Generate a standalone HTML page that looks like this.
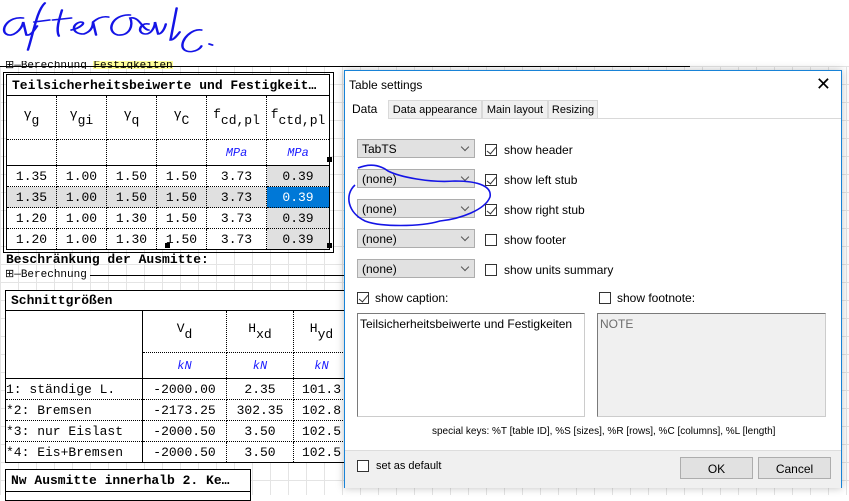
<!DOCTYPE html><html><head><style>
body{margin:0;width:849px;height:495px;overflow:hidden;position:relative;background:#fff;font-family:"Liberation Mono",monospace}
.grid{position:absolute;left:0;top:66px;width:849px;height:429px;background-image:linear-gradient(#e4e4e4 1px,transparent 1px),linear-gradient(90deg,#e4e4e4 1px,transparent 1px);background-size:18px 18px}
.abs{position:absolute}
table{border-collapse:collapse;background:#fff;font-family:"Liberation Mono",monospace;font-size:13px;position:absolute}
td{border:1px dotted #000;text-align:center;padding:0;white-space:nowrap}
sub{font-size:13px;vertical-align:-6px}
.u{color:#1a1aff;font-style:italic;font-size:12px}
.g{background:#e0e0e0}
.ui{font-family:"Liberation Sans",sans-serif;font-size:12px;color:#000;white-space:nowrap}
.dd{position:absolute;left:357px;width:118px;height:19px;background:#e1e1e1;border:1px solid #adadad;box-sizing:border-box;font:12px "Liberation Sans",sans-serif;padding:2px 0 0 4px}
.dd:after{content:"";position:absolute;right:6px;top:4px;width:5px;height:5px;border-right:1px solid #555;border-bottom:1px solid #555;transform:rotate(45deg)}
.cb{position:absolute;width:12px;height:12px;border:1px solid #333;background:#fff;box-sizing:border-box}
.cb.c:after{content:"";position:absolute;left:3px;top:0px;width:4px;height:8px;border-right:1px solid #333;border-bottom:1px solid #333;transform:rotate(40deg)}
.lbl{position:absolute;font:12px "Liberation Sans",sans-serif;white-space:nowrap}
.tab{position:absolute;top:29px;height:18px;border:1px solid #d9d9d9;border-bottom:0;padding:3px 0 0;text-align:center;font-size:11px;box-sizing:border-box;background:#f0f0f0;overflow:hidden}
</style></head><body>
<div class="grid"></div>
<svg class="abs" style="left:0;top:0" width="240" height="60"><g fill="none" stroke="#1414e6" stroke-width="1.6" stroke-linecap="round" transform="scale(1.55,1)">
<path d="M15 18 C5 16 0 30 4 34 C8 38 14 30 15 22 L17 35 C20 36 22 30 24 26"/>
<path d="M29 3 C24 10 22 30 18 50 M22 22 L32 20"/>
<path d="M40 10 C38 20 36 30 38 36 M34 20 L46 18"/>
<path d="M46 30 C52 28 56 22 52 22 C46 24 46 34 54 34 C58 32 60 28 60 22 L62 35 M60 22 C63 18 66 16 70 17"/>
<path d="M84 15 C72 14 68 32 76 35 C84 36 86 25 84 18 C90 16 92 30 96 30"/>
<path d="M96 24 C90 22 88 34 94 34 C98 34 100 26 100 22 L102 34 C104 34 106 30 107 24"/>
<path d="M114 8 L110 40 C112 40 114 36 116 32"/>
<path d="M130 30 C124 28 116 40 118 48 C120 54 128 52 130 46"/>
<path d="M135 44 L137 45"/></g></svg>
<div class="abs ui" style="left:5px;top:61px;font-family:'Liberation Mono';font-size:11px;line-height:10px;height:8px;overflow:hidden">⊞—Berechnung <span style="background:#ffff99">Festigkeiten</span></div>
<div class="abs" style="left:0;top:66px;width:690px;border-top:1px solid #000"></div>
<div class="abs" style="left:3px;top:72px;width:329px;height:179px;border:1px solid #000"></div>
<table style="left:6px;top:74px;width:324px;border:1px solid #000">
<tr style="height:21px"><td colspan="6" style="text-align:left;padding-left:5px;font-weight:bold;border:1px solid #000">Teilsicherheitsbeiwerte und Festigkeit…</td></tr>
<tr style="height:44px"><td style="width:49px">γ<sub>g</sub></td><td style="width:49px">γ<sub>gi</sub></td><td style="width:49px">γ<sub>q</sub></td><td style="width:49px">γ<sub>C</sub></td><td style="width:59px">f<sub>cd,pl</sub></td><td>f<sub>ctd,pl</sub></td></tr>
<tr style="height:26px;border-bottom:1px solid #000"><td></td><td></td><td></td><td></td><td class="u">MPa</td><td class="u">MPa</td></tr>
<tr style="height:21px"><td>1.35</td><td>1.00</td><td>1.50</td><td>1.50</td><td>3.73</td><td class="g">0.39</td></tr>
<tr style="height:21px" class="g"><td>1.35</td><td>1.00</td><td>1.50</td><td>1.50</td><td>3.73</td><td style="background:#0078d7;color:#fff">0.39</td></tr>
<tr style="height:21px"><td>1.20</td><td>1.00</td><td>1.30</td><td>1.50</td><td>3.73</td><td class="g">0.39</td></tr>
<tr style="height:21px"><td>1.20</td><td>1.00</td><td>1.30</td><td>1.50</td><td>3.73</td><td class="g">0.39</td></tr>
</table>
<div class="abs" style="left:327px;top:157px;width:5px;height:5px;background:#000"></div>
<div class="abs" style="left:327px;top:243px;width:5px;height:5px;background:#000"></div>
<div class="abs" style="left:165px;top:243px;width:5px;height:5px;background:#000"></div>
<div class="abs" style="left:6px;top:252px;font:bold 13px 'Liberation Mono';">Beschränkung der Ausmitte:</div>
<div class="abs" style="left:5px;top:267px;font:11px 'Liberation Mono';">⊞—Berechnung</div>
<div class="abs" style="left:90px;top:275px;width:255px;border-top:1px solid #000"></div>
<table style="left:5px;top:290px;width:345px;border:1px solid #000">
<tr style="height:20px"><td colspan="4" style="text-align:left;padding-left:5px;font-weight:bold;border:1px solid #000">Schnittgrößen</td></tr>
<tr style="height:42px"><td rowspan="2" style="width:136px;border:1px solid #000"></td><td style="width:83px;border-left:1px solid #000">V<sub>d</sub></td><td style="width:66px">H<sub>xd</sub></td><td>H<sub>yd</sub></td></tr>
<tr style="height:26px;border-bottom:1px solid #000"><td class="u" style="border-left:1px solid #000">kN</td><td class="u">kN</td><td class="u">kN</td></tr>
<tr style="height:21px"><td style="text-align:left;border-right:1px solid #000">1: ständige L.</td><td>-2000.00</td><td>2.35</td><td>101.3</td></tr>
<tr style="height:21px"><td style="text-align:left;border-right:1px solid #000">*2: Bremsen</td><td>-2173.25</td><td>302.35</td><td>102.8</td></tr>
<tr style="height:21px"><td style="text-align:left;border-right:1px solid #000">*3: nur Eislast</td><td>-2000.50</td><td>3.50</td><td>102.5</td></tr>
<tr style="height:21px"><td style="text-align:left;border-right:1px solid #000">*4: Eis+Bremsen</td><td>-2000.50</td><td>3.50</td><td>102.5</td></tr>
</table>
<div class="abs" style="left:5px;top:469px;width:244px;height:30px;border:1px solid #000;background:#fff"><div style="padding:3px 0 0 5px;font:bold 13px 'Liberation Mono';border-bottom:1px solid #000;height:18px">Nw Ausmitte innerhalb 2. Ke…</div></div>
<!-- dialog -->
<div class="abs" style="left:344px;top:70px;width:496px;height:416px;border:1px solid #1883d7;background:#fff;box-shadow:0 0 8px rgba(0,0,0,.25)">
<div class="ui" style="position:absolute;left:4px;top:7px">Table settings</div>
<div style="position:absolute;right:10px;top:3px;font:18px 'Liberation Sans'">✕</div>
<div style="position:absolute;left:0;top:47px;width:496px;border-top:1px solid #d9d9d9"></div>
<div class="ui" style="position:absolute;left:0;top:26px;width:43px;height:22px;background:#fff;padding:5px 0 0 7px;box-sizing:border-box">Data</div>
<div class="ui tab" style="left:43px;width:94px">Data appearance</div>
<div class="ui tab" style="left:137px;width:66px">Main layout</div>
<div class="ui tab" style="left:203px;width:50px">Resizing</div>
<div style="position:absolute;left:0;top:379px;width:496px;height:37px;background:#f0f0f0;border-top:1px solid #ddd"></div>
</div>
<div class="dd" style="top:139px">TabTS</div><div class="cb c" style="left:485px;top:144px"></div><div class="lbl" style="left:504px;top:143px">show header</div>
<div class="dd" style="top:169px">(none)</div><div class="cb c" style="left:485px;top:174px"></div><div class="lbl" style="left:504px;top:173px">show left stub</div>
<div class="dd" style="top:199px">(none)</div><div class="cb c" style="left:485px;top:204px"></div><div class="lbl" style="left:504px;top:203px">show right stub</div>
<div class="dd" style="top:229px">(none)</div><div class="cb" style="left:485px;top:234px"></div><div class="lbl" style="left:504px;top:233px">show footer</div>
<div class="dd" style="top:259px">(none)</div><div class="cb" style="left:485px;top:264px"></div><div class="lbl" style="left:504px;top:263px">show units summary</div>
<div class="cb c" style="left:357px;top:292px"></div><div class="lbl" style="left:375px;top:291px">show caption:</div>
<div class="cb" style="left:599px;top:292px"></div><div class="lbl" style="left:617px;top:291px">show footnote:</div>
<div class="abs" style="left:357px;top:313px;width:228px;height:104px;border:1px solid #7a7a7a;border-right-color:#ccc;border-bottom-color:#ccc;box-sizing:border-box;font:12px 'Liberation Sans';padding:3px 2px">Teilsicherheitsbeiwerte und Festigkeiten</div>
<div class="abs" style="left:597px;top:313px;width:229px;height:104px;border:1px solid #7a7a7a;border-right-color:#ccc;border-bottom-color:#ccc;background:#f0f0f0;box-sizing:border-box;font:12px 'Liberation Sans';color:#6d6d6d;padding:3px 2px">NOTE</div>
<div class="lbl" style="left:432px;top:426px;font-size:10px">special keys: %T [table ID], %S [sizes], %R [rows], %C [columns], %L [length]</div>
<div class="cb" style="left:357px;top:460px"></div><div class="lbl" style="left:376px;top:460px;font-size:11px">set as default</div>
<div class="abs ui" style="left:680px;top:457px;width:73px;height:22px;border:1px solid #adadad;background:#e1e1e1;box-sizing:border-box;text-align:center;padding-top:4px">OK</div>
<div class="abs ui" style="left:758px;top:457px;width:73px;height:22px;border:1px solid #adadad;background:#e1e1e1;box-sizing:border-box;text-align:center;padding-top:4px">Cancel</div>
<svg class="abs" style="left:340px;top:155px" width="170" height="80"><path d="M18 13 C30 8 40 10 48 16 C60 22 90 28 115 26 C140 26 152 32 150 42 C145 55 120 64 100 66 C80 72 40 72 25 66 C8 58 4 40 15 30" fill="none" stroke="#1414e6" stroke-width="1.6"/></svg>
</body></html>
